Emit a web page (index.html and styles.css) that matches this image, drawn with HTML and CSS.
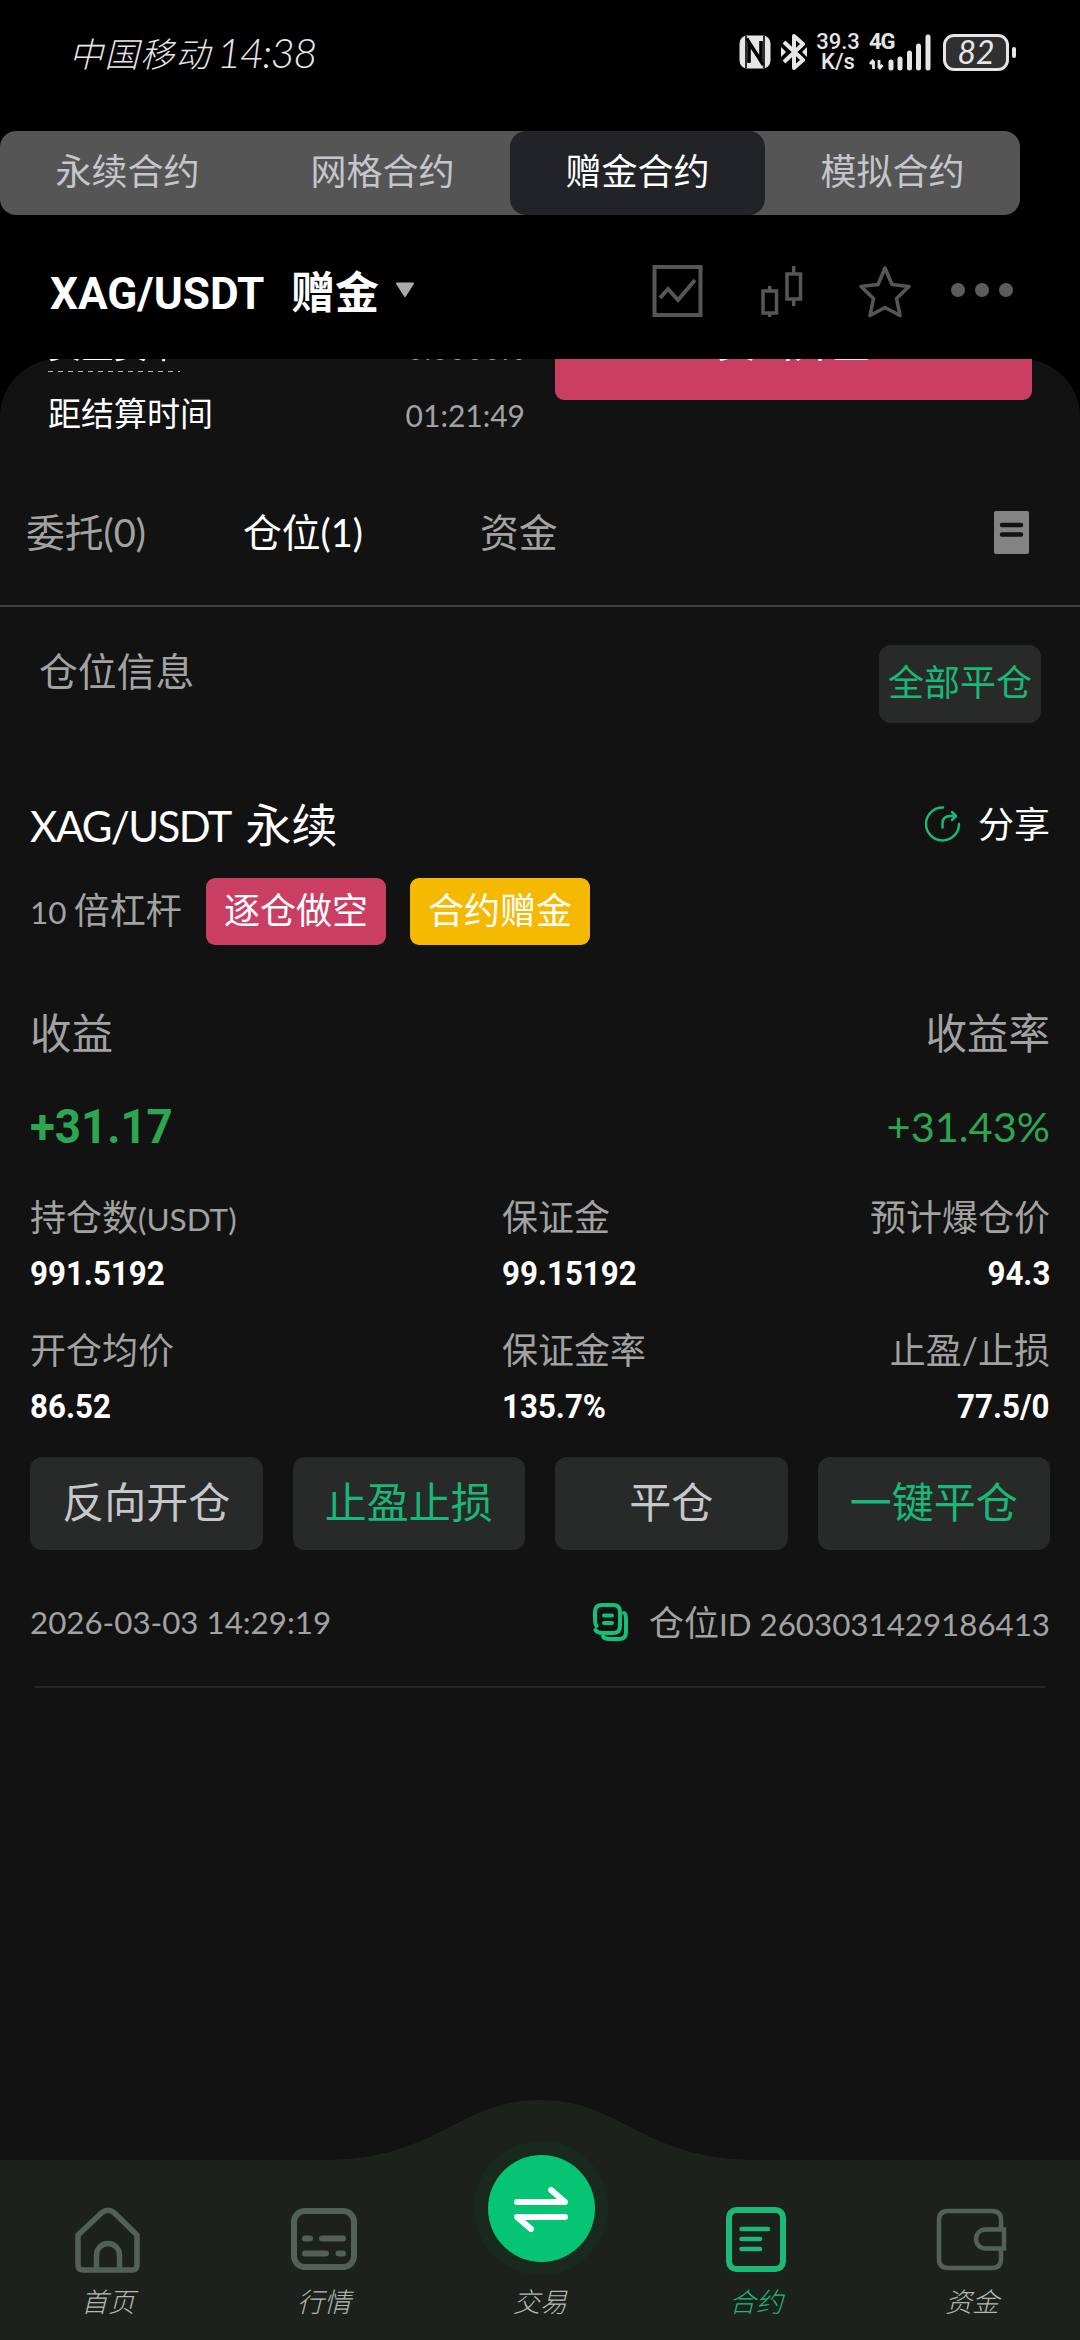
FILE: index.html
```html
<!DOCTYPE html>
<html lang="zh-CN">
<head>
<meta charset="utf-8">
<title>XAG/USDT 赠金合约</title>
<link rel="stylesheet" href="styles.css">
</head>
<body>
<div class="app">
  <header class="status">
    <div class="carrier"><span>中国移动</span><span class="clock">14:38</span></div>
    <div class="indicators">
      <svg class="nfc" width="32" height="34" viewBox="0 0 32 34"><rect x="0.5" y="0.5" width="31" height="33" rx="8" fill="#e6e6e6"/><path d="M7 1v32M25 1v32" stroke="#000" stroke-width="1.6"/><path d="M10 28V8L22 25.500V6" fill="none" stroke="#000" stroke-width="3.600"/><path d="M8 3.500L24 30" stroke="#000" stroke-width="3"/></svg>
      <svg class="bt" width="26" height="36" viewBox="0 0 26 36"><path d="M3 8l19 18-9 8V2l9 8L3 28" fill="none" stroke="#e6e6e6" stroke-width="4" stroke-linejoin="round"/><path d="M0 13l5 5-5 5zM26 13l-5 5 5 5z" fill="#e6e6e6"/></svg>
      <div class="speed"><span>39.3</span><span>K/s</span></div>
      <div class="signal">
        <span class="gen">4G</span>
        <svg width="62" height="38" viewBox="0 0 62 38"><path d="M4.500 36V28M1 31l3.500-4M10 27v8m3.500-3L10 36" fill="none" stroke="#e6e6e6" stroke-width="2.800"/><path d="M22 29v6M31 26v9M40.500 20v15M49.500 13v22M59 4v31" stroke="#e6e6e6" stroke-width="5" stroke-linecap="round"/></svg>
      </div>
      <div class="battery"><span>82</span></div><i class="cap"></i>
    </div>
  </header>

  <nav class="modes">
    <a>永续合约</a><a>网格合约</a><a class="on">赠金合约</a><a>模拟合约</a>
  </nav>

  <section class="head">
    <h1><span class="din pair">XAG/USDT</span><span class="gift">赠金</span></h1>
    <svg class="caret" width="20" height="16" viewBox="0 0 20 16"><path d="M2 1.500h16L10 14z" fill="#aaa" stroke="#aaa" stroke-width="2" stroke-linejoin="round"/></svg>
    <div class="tools">
      <svg class="t1" width="52" height="54" viewBox="0 0 52 54"><g fill="none" stroke="#565656" stroke-width="4"><rect x="2.500" y="3" width="46" height="48"/><path d="M8 34l8-9 10 11 17-20"/></g></svg>
      <svg class="t2" width="42" height="54" viewBox="0 0 42 54"><g fill="none" stroke="#565656" stroke-width="3.500"><rect x="2" y="27" width="13.500" height="22"/><rect x="26" y="10" width="13.500" height="25"/><path d="M8.700 22v5M8.700 49v4M32.700 2v8M32.700 35v7"/></g></svg>
      <svg class="t3" width="52" height="54" viewBox="0 0 52 54"><path d="M26 4l7 16.500 17 2L37.500 34.500 41 51.500 26 43.500 11 51.500 14.500 34.500 2 22.500l17-2z" fill="none" stroke="#565656" stroke-width="3.600" stroke-linejoin="round"/></svg>
      <svg class="t4" width="62" height="54" viewBox="0 0 62 54"><g fill="#5c5c5c"><circle cx="7" cy="26" r="7"/><circle cx="31" cy="26" r="7"/><circle cx="55" cy="26" r="7"/></g></svg>
    </div>
  </section>

  <main class="panel">
    <div class="scrolled">
      <div class="rates">
        <div class="rate first"><span class="dashed">资金费率</span><span class="num">0.0000%</span></div>
        <div class="rate"><span>距结算时间</span><span class="num">01:21:49</span></div>
      </div>
      <div class="sell">卖出开空</div>
    </div>

    <div class="tabs">
      <span class="tab a">委托<span class="num">(0)</span></span>
      <span class="tab b on">仓位<span class="num">(1)</span></span>
      <span class="tab c">资金</span>
      <svg width="35" height="43" viewBox="0 0 35 43"><rect width="35" height="43" rx="2" fill="#838383"/><path d="M8 14h19M8 23.500h19" stroke="#121212" stroke-width="4.500" stroke-linecap="round"/></svg>
    </div>

    <div class="info"><span>仓位信息</span><button>全部平仓</button></div>

    <article class="position">
      <div class="row title">
        <h2><span class="num">XAG/USDT</span> 永续</h2>
        <a class="share"><svg width="36" height="36" viewBox="0 0 36 36"><g fill="none" stroke="#18b877" stroke-width="2.500" stroke-linecap="round" stroke-linejoin="round"><path d="M18 1.500A16.500 16.500 0 1 0 34 18"/><path d="M17.500 21.500v-4q0-7.500 8-7.500h4.500M27 6l4 4-4 4"/></g></svg>分享</a>
      </div>
      <div class="row lever"><span class="times"><span class="num">10</span> 倍杠杆</span><span class="tag red">逐仓做空</span><span class="tag gold">合约赠金</span></div>
      <div class="row yield"><span>收益</span><span>收益率</span></div>
      <div class="row gain"><span class="din">+31.17</span><span class="num">+31.43%</span></div>
      <div class="stats">
        <div><span class="k">持仓数<span class="num">(USDT)</span></span><span class="v din">991.5192</span></div>
        <div><span class="k">保证金</span><span class="v din">99.15192</span></div>
        <div class="r"><span class="k">预计爆仓价</span><span class="v din">94.3</span></div>
        <div><span class="k">开仓均价</span><span class="v din">86.52</span></div>
        <div><span class="k">保证金率</span><span class="v din">135.7%</span></div>
        <div class="r"><span class="k">止盈/止损</span><span class="v din">77.5/0</span></div>
      </div>
      <div class="actions">
        <button>反向开仓</button><button class="go">止盈止损</button><button>平仓</button><button class="go">一键平仓</button>
      </div>
      <div class="row foot">
        <span class="num">2026-03-03 14:29:19</span>
        <span class="pid"><svg width="36" height="40" viewBox="0 0 36 40"><g fill="none" stroke="#12c079" stroke-width="4" stroke-linecap="round"><path d="M3.500 24Q2 22 2 18V10q0-7 7-7h11q7 0 7 7v14q0 7-7 7H10q-6 0-7.500-3"/><path d="M31 11q2 1 2 6v13q0 7-7 7H16q-5 0-6-3"/><path d="M11 13.500h8M11 21h8"/></g></svg><span class="idtext">仓位<span class="num">ID 2603031429186413</span></span></span>
      </div>
      <div class="rule"></div>
    </article>
  </main>

  <nav class="dock">
    <svg class="hump" width="1080" height="240" viewBox="0 0 1080 240"><path d="M0 60H325C380 60 415 45 450 27C480 11 505 0 540 0S600 11 630 27C665 45 700 60 755 60H1080V240H0z" fill="#1d211c"/><circle cx="541" cy="108" r="67" fill="#19291d"/></svg>
    <a><svg width="66" height="66" viewBox="0 0 66 66"><g fill="none" stroke="#536055" stroke-width="5.500" stroke-linejoin="round"><path d="M3 28L27 5.500Q33 1 39 5.500L62 28V58Q62 63 57 63H8Q3 63 3 58z"/><path d="M21.500 62V48a11.500 11.500 0 0 1 23 0V62"/></g></svg>首页</a>
    <a><svg width="66" height="66" viewBox="0 0 66 66"><g fill="none" stroke="#536055" stroke-width="6"><rect x="3" y="4" width="60" height="56" rx="11"/><path d="M14 31.500h5M31 31.500h21M14 46.500h21M47.500 46.500h4.500" stroke-linecap="round"/></g></svg>行情</a>
    <a class="trade"><span class="disc"><svg width="54" height="46" viewBox="0 0 54 46"><g fill="none" stroke="#fff" stroke-width="6" stroke-linecap="round" stroke-linejoin="round"><path d="M3 16h48L37 4"/><path d="M51 31H3l14 12"/></g></svg></span>交易</a>
    <a class="now"><svg width="66" height="66" viewBox="0 0 66 66"><g fill="none" stroke="#1db978"><rect x="6" y="3" width="54" height="59" rx="7.500" stroke-width="6"/><path d="M18.500 22h26.500M18.500 32h18.500M18.500 42h18.500" stroke-width="4.500" stroke-linecap="round"/></g></svg>合约</a>
    <a><svg width="72" height="66" viewBox="0 0 72 66"><g fill="none" stroke="#536055" stroke-width="4.500"><path d="M65 22V13q0-9-9-9H12q-9 0-9 9V52q0 9 9 9H56q9 0 9-9V42"/><path d="M68 22.500H49.500a9.500 9.500 0 0 0 0 19H68z"/></g></svg>资金</a>
  </nav>
</div>
</body>
</html>
```
FILE: styles.css
```css
* { box-sizing: border-box; margin: 0; padding: 0; }
body { background: #000; }
button { border: 0; font: inherit; color: inherit; }
svg { display: block; flex: none; }

.app {
  width: 1080px; height: 2340px; overflow: hidden;
  display: flex; flex-direction: column;
  font-family: Lato, "Noto Sans CJK SC", sans-serif;
  color: #fff; background: #000; white-space: nowrap;
}
.num { font-weight: 400; font-size: .875em; }
.din { font-family: Roboto, sans-serif; font-weight: 700; display: inline-block; transform: scaleX(.92); transform-origin: left; }

/* status bar */
.status { height: 131px; padding: 0 64px 27px 69px; display: flex; justify-content: space-between; align-items: center; color: #e6e6e6; }
.carrier { display: flex; align-items: center; gap: 6px; font-size: 34px; font-weight: 300; font-style: italic; letter-spacing: 1.5px; }
.clock { font-size: 42px; letter-spacing: -1.7px; }
.indicators { display: flex; align-items: center; }
.bt { margin-left: 10px; }
.speed { margin-left: 10px; width: 42px; height: 40px; display: flex; flex-direction: column; align-items: center; font: 500 22px/20px Roboto, sans-serif; }
.signal { position: relative; margin-left: 10px; width: 62px; height: 38px; }
.gen { position: absolute; left: 0; top: -3px; font: 700 22px/24px Roboto, sans-serif; letter-spacing: -1px; }
.battery { margin-left: 12px; width: 66px; height: 37px; border: 3px solid #e6e6e6; border-radius: 11px; background: #303030; display: flex; align-items: center; justify-content: center; font-size: 32px; font-style: italic; line-height: 30px; }
.cap { margin-left: 3px; width: 4px; height: 11px; border-radius: 2px; background: #e6e6e6; }

/* contract type switch */
.modes { width: 1020px; height: 84px; border-radius: 16px; background: #555; display: flex; }
.modes a { width: 255px; line-height: 81px; text-align: center; font-size: 36px; color: #c5c5cb; border-radius: 16px; }
.modes .on { background: #222327; color: #fff; }

/* pair header */
.head { height: 144px; padding: 9px 67px 0 50px; display: flex; align-items: center; }
.head h1 { display: flex; align-items: center; width: 330px; line-height: 60px; }
.pair { font-size: 45px; width: 241px; line-height: 64px; padding-top: 4px; transform: scaleX(.98); }
.gift { font-size: 44px; font-weight: 700; }
.caret { margin: -3px 0 0 15px; }
.tools { margin: -2px 0 0 auto; display: flex; }
.t2 { margin-left: 57px; } .t3 { margin-left: 56px; } .t4 { margin-left: 40px; }

/* panel */
.panel { flex: 1; min-height: 0; background: #121212; border-radius: 58px 58px 0 0; }
.scrolled { height: 109px; display: flex; justify-content: space-between; align-items: flex-start; overflow: hidden; clip-path: inset(0); padding: 0 48px; }
.rates { width: 477px; margin-top: -30px; }
.rate { height: 68px; margin-top: 6px; display: flex; justify-content: space-between; align-items: center; font-size: 33px; }
.rate.first { height: 43px; margin: 0; align-items: flex-start; line-height: 38px; }
.rate .num { color: #a2a2a2; font-size: 30px; padding-top: 5px; }
.rate.first .num { padding: 0; }
.dashed { height: 43px; background: repeating-linear-gradient(90deg, #bbb 0 5px, transparent 5px 10px) 0 100% / 100% 1.500px no-repeat; }
.rate.first .dashed { line-height: 32px; }
.sell { width: 477px; height: 70px; margin-top: -29px; border-radius: 9px; background: #c93e62; text-align: center; font-size: 38.500px; line-height: 25px; }

.tabs { height: 139px; padding: 0 51px 13px 26px; display: flex; align-items: center; border-bottom: 2px solid #414141; color: #a2a2a2; font-size: 38.800px; }
.tabs .num { font-size: 38px; }
.tab.a { width: 217px; } .tab.b { width: 237px; } .tab.on { color: #fff; }
.tabs svg { margin: 4px 0 0 auto; }

.info { height: 156px; padding: 38px 39px 0 39px; display: flex; justify-content: space-between; align-items: flex-start; color: #a2a2a2; font-size: 38.800px; line-height: 52px; }
.info button { width: 162px; height: 78px; border-radius: 12px; background: #282a29; color: #18b877; font-size: 36px; line-height: 72px; padding-bottom: 4px; }

.position { padding: 0 30px; }
.row { display: flex; justify-content: space-between; align-items: center; color: #a2a2a2; }
.title { height: 124px; padding-bottom: 7px; color: #fff; }
.title h2 { font-size: 46px; font-weight: 400; word-spacing: 3px; }
.title .num { font-size: 42px; letter-spacing: -1.600px; }
.share { display: flex; align-items: center; gap: 17px; font-size: 36px; }
.share svg { margin-top: 4px; }
.lever { height: 47px; margin-top: 1px; justify-content: flex-start; font-size: 36px; }
.times { width: 176px; margin-top: -7px; word-spacing: -2px; }
.tag { width: 180px; height: 67px; margin-right: 24px; border-radius: 9px; text-align: center; line-height: 64px; color: #fff; }
.red { background: #cb3e63; } .gold { background: #f4b900; }
.yield { height: 72px; margin-top: 60px; font-size: 41.500px; }
.gain { height: 114px; padding-top: 4px; color: #2ba752; }
.gain .din { font-size: 48px; transform: scaleX(.95); }
.gain .num { font-size: 41.500px; }
.stats { display: grid; grid-template-columns: 472px 300px 248px; row-gap: 22px; padding-top: 8px; }
.stats > div { display: flex; flex-direction: column; align-items: flex-start; height: 111px; }
.stats .r { align-items: flex-end; }
.r .din { transform-origin: right; }
.k { font-size: 36px; height: 56px; line-height: 56px; color: #a2a2a2; }
.v { font-size: 34px; line-height: 56px; }
.actions { display: grid; grid-template-columns: repeat(4, 1fr); gap: 30px; margin-top: 24px; }
.actions button { height: 93px; border-radius: 12px; background: #282a29; color: #c6c6cb; font-size: 42px; line-height: 88px; padding-bottom: 4px; }
.actions .go { color: #18b877; }
.foot { height: 136px; padding-top: 8px; font-size: 35px; }
.foot .num { font-size: 31.300px; }
.pid { display: flex; align-items: center; gap: 20px; }
.idtext { margin-top: -4px; }
.rule { height: 2px; margin: 0 5px; background: #262626; }

/* bottom dock */
.dock { position: relative; height: 240px; margin-top: -240px; display: flex; align-items: flex-start; }
.hump { position: absolute; left: 0; top: 0; }
.dock a { position: relative; width: 216px; height: 240px; padding-top: 107px; display: flex; flex-direction: column; align-items: center; font-size: 27px; font-weight: 300; font-style: italic; line-height: 36px; color: #b4b8b4; gap: 11px; }
.dock .trade { padding-top: 55px; gap: 22px; }
.dock .now { color: #1db978; }
.disc { width: 107px; height: 107px; border-radius: 50%; background: #05c575; display: flex; align-items: center; justify-content: center; margin-left: 2px; }
```
